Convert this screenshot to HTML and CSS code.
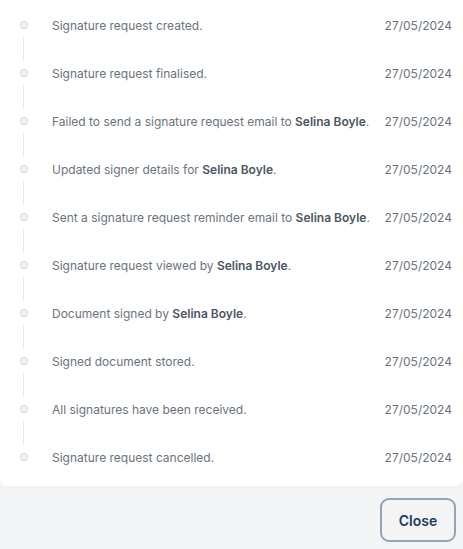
FILE: index.html
```html
<!DOCTYPE html>
<html lang="en">
<head>
<meta charset="utf-8">
<link rel="stylesheet" href="styles.css">
</head>
<body>
<div class="modal">
  <div class="panel">
    <ul class="timeline">
      <li class="item"><div class="marker"><span class="dot"></span><span class="line"></span></div><p class="text">Signature request created.</p><span class="date">27/05/2024</span></li>
      <li class="item"><div class="marker"><span class="dot"></span><span class="line"></span></div><p class="text">Signature request finalised.</p><span class="date">27/05/2024</span></li>
      <li class="item"><div class="marker"><span class="dot"></span><span class="line"></span></div><p class="text">Failed to send a signature request email to <b>Selina Boyle</b>.</p><span class="date">27/05/2024</span></li>
      <li class="item"><div class="marker"><span class="dot"></span><span class="line"></span></div><p class="text">Updated signer details for <b>Selina Boyle</b>.</p><span class="date">27/05/2024</span></li>
      <li class="item"><div class="marker"><span class="dot"></span><span class="line"></span></div><p class="text">Sent a signature request reminder email to <b>Selina Boyle</b>.</p><span class="date">27/05/2024</span></li>
      <li class="item"><div class="marker"><span class="dot"></span><span class="line"></span></div><p class="text">Signature request viewed by <b>Selina Boyle</b>.</p><span class="date">27/05/2024</span></li>
      <li class="item"><div class="marker"><span class="dot"></span><span class="line"></span></div><p class="text">Document signed by <b>Selina Boyle</b>.</p><span class="date">27/05/2024</span></li>
      <li class="item"><div class="marker"><span class="dot"></span><span class="line"></span></div><p class="text">Signed document stored.</p><span class="date">27/05/2024</span></li>
      <li class="item"><div class="marker"><span class="dot"></span><span class="line"></span></div><p class="text">All signatures have been received.</p><span class="date">27/05/2024</span></li>
      <li class="item"><div class="marker"><span class="dot"></span></div><p class="text">Signature request cancelled.</p><span class="date">27/05/2024</span></li>
    </ul>
  </div>
  <div class="footer">
    <button class="close-btn" type="button">Close</button>
  </div>
</div>
</body>
</html>
```
FILE: styles.css
```css
html, body {
  margin: 0;
  padding: 0;
  background: #f3f4f6;
  font-family: Inter, "Liberation Sans", Arial, sans-serif;
}
.modal {
  display: flex;
  flex-direction: column;
  width: 463px;
  height: 549px;
  overflow: hidden;
}
.panel {
  background: #ffffff;
  border-radius: 0 0 8px 8px;
  padding: 1px 0 5px 0;
}
.timeline {
  list-style: none;
  margin: 0;
  padding: 0;
}
.item {
  display: grid;
  grid-template-columns: 48px 1fr auto;
  column-gap: 4px;
  height: 48px;
  align-items: center;
  padding-right: 11px;
}
.marker {
  align-self: start;
  display: flex;
  flex-direction: column;
  align-items: center;
  padding-top: 20px;
  height: 28px;
  box-sizing: content-box;
}
.dot {
  width: 6px;
  height: 6px;
  border-radius: 50%;
  border: 1px solid #d1d5db;
  background: #f3f4f6;
  flex-shrink: 0;
}
.line {
  width: 1px;
  height: 24px;
  margin-top: 8px;
  margin-left: -1px;
  background: #e5e7eb;
  flex-shrink: 0;
}
.text {
  margin: 0;
  font-size: 12px;
  color: #6b7280;
  white-space: nowrap;
}
.text b {
  font-weight: 600;
  color: #4b5563;
}
.date {
  font-size: 12px;
  color: #6b7280;
}
.footer {
  display: flex;
  justify-content: flex-end;
  padding: 12px 7px 12px 0;
}
.close-btn {
  width: 76px;
  height: 44px;
  border: 2px solid #94a3b8;
  border-radius: 9px;
  background: #f3f4f6;
  color: #1e3a5f;
  font-family: Inter, "Liberation Sans", Arial, sans-serif;
  font-size: 14px;
  font-weight: 600;
}
```
